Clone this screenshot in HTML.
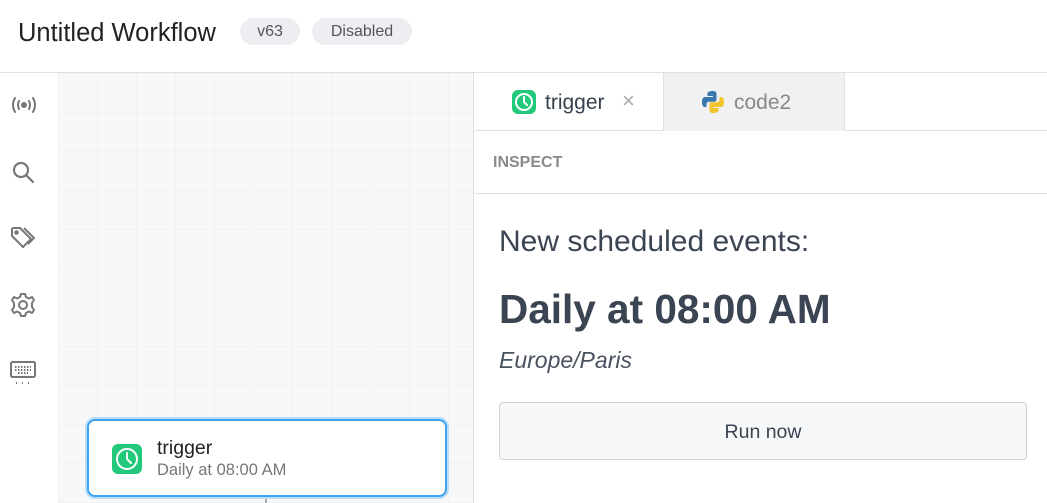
<!DOCTYPE html>
<html><head><meta charset="utf-8"><style>
*{box-sizing:border-box;margin:0;padding:0}
body{width:1047px;height:503px;overflow:hidden;background:#fff;font-family:"Liberation Sans",sans-serif;color:#364150;position:relative}
.hdr{position:absolute;left:0;top:0;width:1047px;height:73px;border-bottom:1px solid #dfe1e5}
.title{position:absolute;left:18px;top:19px;font-size:25.5px;color:#222}
.pill{position:absolute;top:18px;height:27px;border-radius:14px;background:#eceef1;font-size:16px;color:#555;line-height:27px;text-align:center}
.side{position:absolute;left:0;top:73px;width:58px;height:430px;background:#fff}
.side svg{position:absolute;left:10px}
.canvas{position:absolute;left:58px;top:73px;width:416px;height:430px;background-color:#f7f8f9;background-image:linear-gradient(#f1f2f4 1px,transparent 1px),linear-gradient(90deg,#f1f2f4 1px,transparent 1px);background-size:39px 39px;border-right:1px solid #dfe1e5}
.node{position:absolute;left:87px;top:419px;width:360px;height:78px;border:2px solid #3da2f0;border-radius:8px;background:#fff;box-shadow:0 0 0 2px #b8dcfa}
.ic{position:absolute;width:30px;height:30px;border-radius:6px;background:#22c97a}
.tabs{position:absolute;left:475px;top:73px;width:572px;height:58px;border-bottom:1px solid #dfe1e5}
.t2{position:absolute;left:188px;top:0;width:182px;height:58px;background:#f0f1f3;border-left:1px solid #dfe1e5;border-right:1px solid #dfe1e5}
.insp{position:absolute;left:475px;top:131px;width:572px;height:63px;border-bottom:1px solid #dfe1e5}
</style></head><body>
<div class="hdr">
<div class="title">Untitled Workflow</div>
<div class="pill" style="left:240px;width:60px">v63</div>
<div class="pill" style="left:312px;width:100px">Disabled</div>
</div>
<div class="side">
<svg style="top:22px" width="28" height="20" viewBox="0 0 28 20" fill="none" stroke="#777" stroke-width="2" stroke-linecap="round"><path d="M5 3Q1 10 5 17M9 6Q7 10 9 14M23 3Q27 10 23 17M19 6Q21 10 19 14"/><circle cx="14" cy="10" r="2" fill="#777"/></svg>
<svg style="top:86px" width="28" height="28" viewBox="0 0 28 28" fill="none" stroke="#777" stroke-width="2.2" stroke-linecap="round"><circle cx="11" cy="11" r="7"/><path d="M16 16L23 23"/></svg>
<svg style="top:152px" width="28" height="28" viewBox="0 0 28 28" fill="none" stroke="#777" stroke-width="2" stroke-linejoin="round"><path d="M2 4V11L13 22L21 14L10 3H3Z"/><path d="M14 3L24 13L18 19"/><circle cx="6.5" cy="7.5" r="1.3" fill="#777"/></svg>
<svg style="top:218px" width="28" height="28" viewBox="0 0 28 28" fill="none" stroke="#777" stroke-width="2"><circle cx="13" cy="14" r="4"/><path d="M11 3H15L16 6L19 7.5L22 6L24 9L22 12V16L24 19L22 22L19 20.5L16 22L15 25H11L10 22L7 20.5L4 22L2 19L4 16V12L2 9L4 6L7 7.5L10 6Z" stroke-linejoin="round"/></svg>
<svg style="top:287px" width="28" height="28" viewBox="0 0 28 28" fill="none" stroke="#777" stroke-width="2"><rect x="1" y="2" width="24" height="15" rx="1.5"/><path d="M5 7H21M5 10H21M8 13H18" stroke-dasharray="1.5 1.5"/><path d="M6 23H7M12 23H13M18 23H19"/></svg>
</div>
<div class="canvas"></div>
<div style="position:absolute;left:265px;top:496px;width:2px;height:7px;background:#aaa"></div>
<div class="node">
<div class="ic" style="left:23px;top:23px"><svg width="30" height="30" viewBox="0 0 30 30" fill="none" stroke="#fff" stroke-width="2"><circle cx="15" cy="15" r="10"/><path d="M15 9V15L19 19" stroke-linecap="round"/></svg></div>
<div style="position:absolute;left:68px;top:16px;font-size:19.5px;color:#222">trigger</div>
<div style="position:absolute;left:68px;top:40px;font-size:16.5px;color:#777">Daily at 08:00 AM</div>
</div>
<div class="tabs">
<div class="ic" style="left:37px;top:17px;width:24px;height:24px"><svg width="24" height="24" viewBox="0 0 24 24" fill="none" stroke="#fff" stroke-width="2"><circle cx="12" cy="12" r="8"/><path d="M12 7V12L15 15" stroke-linecap="round"/></svg></div>
<div style="position:absolute;left:70px;top:18px;font-size:21px;color:#364150">trigger</div>
<div style="position:absolute;left:147px;top:15px;font-size:22px;color:#aaa">×</div>
<div class="t2">
<svg style="position:absolute;left:37px;top:17px" width="24" height="24" viewBox="0 0 24 24"><path d="M12 1C6 1 6.5 3.5 6.5 3.5V6H12V7H4S1 6.8 1 12S3.6 17 3.6 17H5.5V14.5S5.3 11.8 8 11.8H13S15.5 11.9 15.5 9.4V4S15.9 1 12 1Z" fill="#3a77ad"/><path d="M12 23C18 23 17.5 20.5 17.5 20.5V18H12V17H20S23 17.2 23 12S20.4 7 20.4 7H18.5V9.5S18.7 12.2 16 12.2H11S8.5 12.1 8.5 14.6V20S8.1 23 12 23Z" fill="#f2c52e"/></svg>
<div style="position:absolute;left:70px;top:18px;font-size:21px;color:#888">code2</div>
</div>
</div>
<div class="insp"><div style="position:absolute;left:18px;top:23px;font-size:16px;font-weight:bold;color:#8a8a8a">INSPECT</div></div>
<div style="position:absolute;left:499px;top:225px;font-size:30px;color:#3b4452">New scheduled events:</div>
<div style="position:absolute;left:499px;top:286px;font-size:40.5px;font-weight:bold;color:#3b4452">Daily at 08:00 AM</div>
<div style="position:absolute;left:499px;top:347px;font-size:23px;font-style:italic;color:#4a5260">Europe/Paris</div>
<div style="position:absolute;left:499px;top:402px;width:528px;height:58px;border:1px solid #cfd3d8;border-radius:4px;background:#f6f7f8;text-align:center;line-height:58px;font-size:19.5px;color:#3b4452">Run now</div>
</body></html>
